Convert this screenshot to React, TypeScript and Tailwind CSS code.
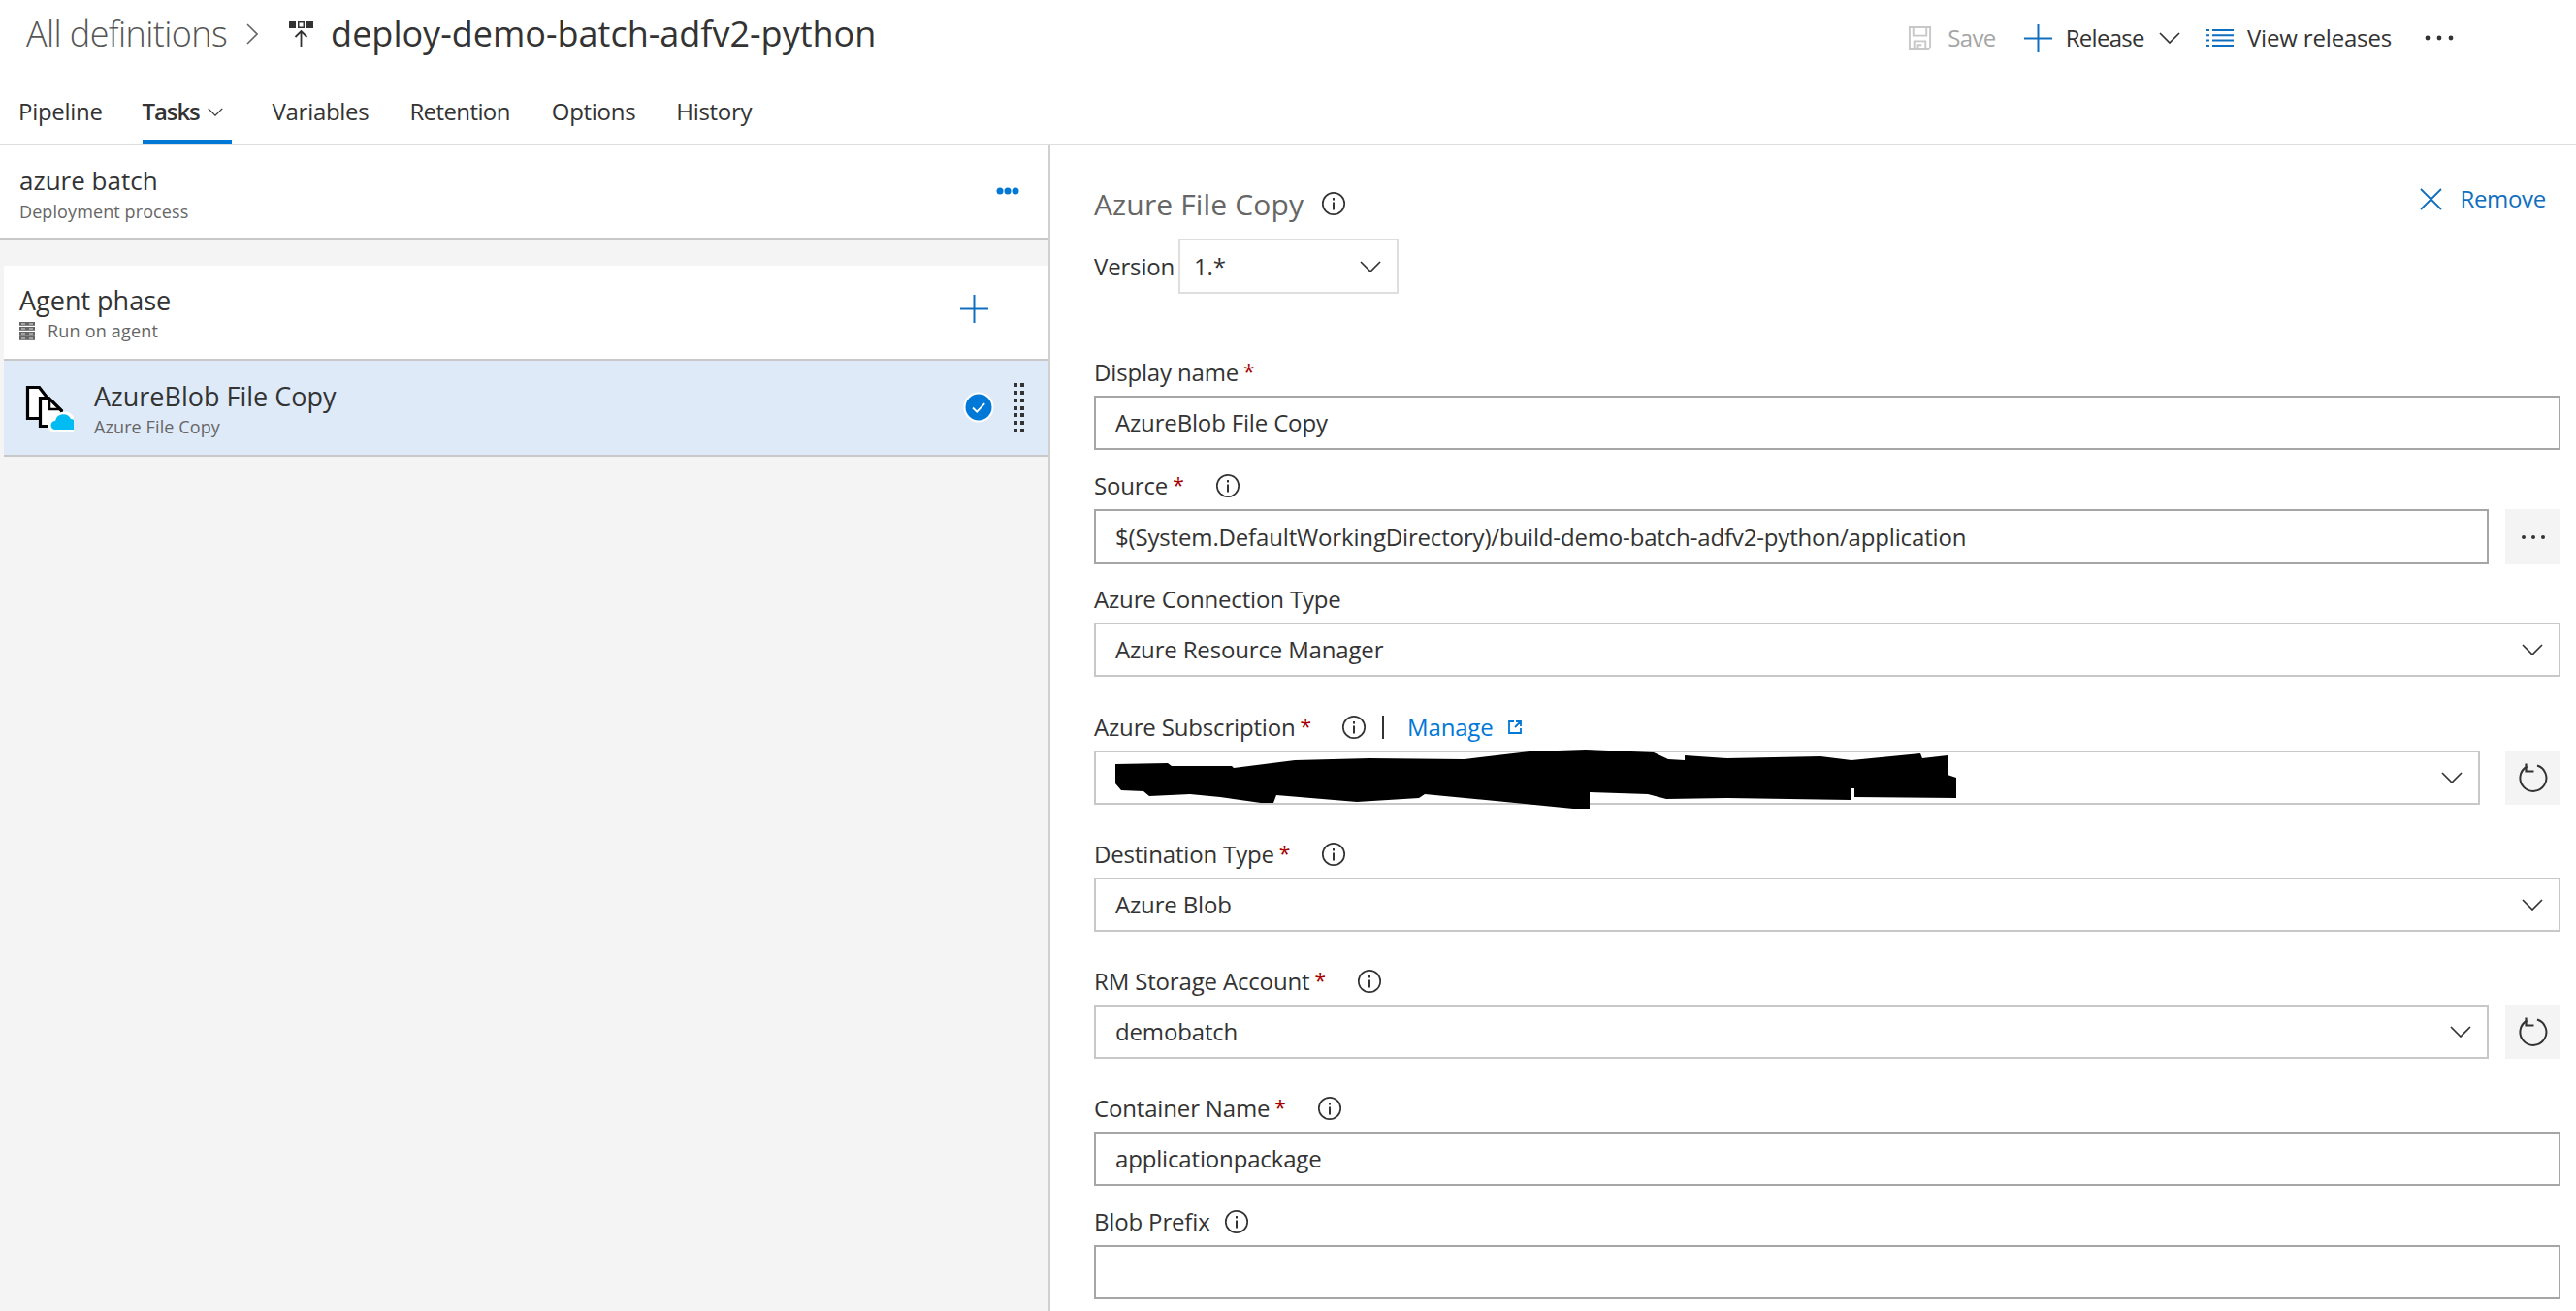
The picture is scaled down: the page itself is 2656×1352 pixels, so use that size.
const InfoIcon = ({ className = '' }: { className?: string }) => (
  <svg viewBox="0 0 26 26" className={`w-[26px] h-[26px] shrink-0 ${className}`} fill="none" stroke="#333">
    <circle cx="13" cy="13" r="11.2" strokeWidth="1.7" />
    <path d="M13 11.500v8" strokeWidth="2" />
    <path d="M13 7v2.400" strokeWidth="2" />
  </svg>
);

const Chevron = ({ className = '' }: { className?: string }) => (
  <svg viewBox="0 0 22 12" className={`w-[22px] h-[12px] shrink-0 ${className}`} fill="none" stroke="#333" strokeWidth="1.7">
    <path d="M1 1l10 10L21 1" />
  </svg>
);

const PlusIcon = ({ className = '' }: { className?: string }) => (
  <svg viewBox="0 0 29 29" className={`w-[29px] h-[29px] shrink-0 ${className}`} fill="none" stroke="#106ebe" strokeWidth="2">
    <path d="M14.500 0v29M0 14.500h29" />
  </svg>
);

const RefreshButton = () => (
  <button className="w-[57px] h-[56px] shrink-0 bg-[#f4f4f4] flex items-center justify-center">
    <svg viewBox="0 0 30 30" className="w-[30px] h-[30px]" fill="none" stroke="#333" strokeWidth="2">
      <path d="M19 2.500A13.500 13.500 0 1 1 8.500 3.500" />
      <path d="M7.500 0.500v8h8" strokeWidth="2.200" />
    </svg>
  </button>
);

const Label = ({ text, required, info }: { text: string; required?: boolean; info?: string }) => (
  <div className="h-[32px] mb-[8px] flex items-center text-[#333] text-[24px] tracking-[-0.16px]">
    <span>{text}</span>
    {required && <span className="text-[#a80000] text-[21px] ml-[5px]">*</span>}
    {info && <span className={info}><InfoIcon /></span>}
  </div>
);

const TextField = ({ value, className = '' }: { value?: string; className?: string }) => (
  <div className={`border-2 border-[#a6a6a6] bg-white px-[20px] flex items-center text-[#333] text-[24px] tracking-[-0.16px] ${className}`}>
    {value}
  </div>
);

const SelectField = ({ value, className = '' }: { value?: string; className?: string }) => (
  <div className={`h-[56px] border-2 border-[#c8c8c8] bg-white pl-[20px] pr-[16px] flex items-center justify-between text-[#333] text-[24px] tracking-[-0.16px] ${className}`}>
    <span>{value}</span>
    <Chevron />
  </div>
);

const SaveIcon = () => (
  <svg viewBox="0 0 26 26" className="w-[25px] h-[25px]" fill="none" stroke="#c8c8c8" strokeWidth="2">
    <path d="M2 1h22v22l-2 2H2z" />
    <path d="M6 1v9h14V1" />
    <path d="M7 25v-9h12v9" />
    <path d="M11 25v-5h4" />
  </svg>
);

const BuildDefIcon = () => (
  <svg viewBox="0 0 26 26" className="w-[26px] h-[26px]">
    <rect x="1" y="0" width="7" height="7" fill="#333" />
    <rect x="10" y="0" width="7" height="7" fill="#333" />
    <rect x="11.500" y="1.500" width="4" height="4" fill="#fff" />
    <rect x="19" y="0" width="7" height="7" fill="#333" />
    <path d="M13.500 26V10M7.500 16l6-6 6 6" fill="none" stroke="#333" strokeWidth="1.800" />
  </svg>
);

const ListIcon = () => (
  <svg viewBox="0 0 28 18" className="w-[28px] h-[18px]" fill="none" stroke="#106ebe" strokeWidth="2">
    <path d="M0 1h3M6 1h22M0 6.300h3M6 6.300h22M0 11.600h3M6 11.600h22M0 17h3M6 17h22" />
  </svg>
);

const ServerIcon = () => (
  <svg viewBox="0 0 16 19" className="w-[16px] h-[19px] shrink-0">
    <rect y="0" width="16" height="3.800" fill="#666" />
    <rect y="5" width="16" height="3.800" fill="#666" />
    <rect y="10" width="16" height="3.800" fill="#666" />
    <rect y="15" width="16" height="3.800" fill="#666" />
    <path d="M2 2h4M2 7h4M2 12h4M2 17h4M10 2h4M10 7h4M10 12h4M10 17h4" stroke="#ddd" strokeWidth="1.200" />
  </svg>
);

const FileCopyIcon = () => (
  <svg viewBox="0 0 50 50" className="w-[50px] h-[50px] shrink-0">
    <path d="M2.500 3.500h12l7 9v23h-19z" fill="#fff" stroke="#000" strokeWidth="3.200" />
    <path d="M15.500 14.500h9l13 13v16h-22z" fill="#fff" stroke="#000" strokeWidth="3.200" />
    <path d="M25 15v11h12" fill="none" stroke="#000" strokeWidth="2.500" />
    <path d="M31 50a7 7 0 0 1-1-14 11 11 0 0 1 20-2v16z" fill="#fff" />
    <path d="M31 47a4.500 4.500 0 0 1 0-9 8.500 8.500 0 0 1 16-2 7 7 0 0 1 3 1v10z" fill="#00bcf2" />
  </svg>
);

const Gripper = () => (
  <div className="grid grid-cols-2 gap-x-[3px] gap-y-[3.700px] shrink-0 mr-[1px]">
    {Array.from({ length: 14 }).map((_, i) => (
      <span key={i} className="w-[4px] h-[4px] bg-[#333]" />
    ))}
  </div>
);

const Tab = ({ text, className = '' }: { text: string; className?: string }) => (
  <div className={`flex items-center h-[78px] pt-[12px] ${className}`}>{text}</div>
);

export default function App() {
  return (
    <div className="w-[2656px] h-[1352px] overflow-hidden bg-white font-['Open_Sans','Noto_Sans',sans-serif] text-[#333] flex flex-col">
      <div className="h-[70px] flex items-center justify-between shrink-0">
        <div className="flex items-center pl-[27px]">
          <span className="text-[36px] font-light text-[#555] tracking-[-0.6px]">All definitions</span>
          <svg viewBox="0 0 12 22" className="w-[12px] h-[22px] ml-[20px]" fill="none" stroke="#666" strokeWidth="1.600">
            <path d="M1 1l10 10L1 21" />
          </svg>
          <span className="ml-[31px]"><BuildDefIcon /></span>
          <span className="ml-[18px] text-[36px] text-[#333] font-normal">deploy-demo-batch-adfv2-python</span>
        </div>
        <div className="flex items-center text-[24px] tracking-[-0.16px] pr-[126px] mb-[-8px]">
          <SaveIcon />
          <span className="ml-[16px] text-[#a6a6a6] tracking-[-0.6px]">Save</span>
          <PlusIcon className="ml-[29px]" />
          <span className="ml-[14px] tracking-[-0.7px]">Release</span>
          <Chevron className="ml-[15px]" />
          <span className="ml-[27px]"><ListIcon /></span>
          <span className="ml-[14px]">View releases</span>
          <svg viewBox="0 0 30 6" className="w-[30px] h-[6px] ml-[34px]" fill="#333">
            <circle cx="3" cy="3" r="2.400" />
            <circle cx="15" cy="3" r="2.400" />
            <circle cx="27" cy="3" r="2.400" />
          </svg>
        </div>
      </div>

      <div className="h-[80px] shrink-0 border-b-2 border-[#dedede] flex items-stretch pl-[19px] text-[24px] tracking-[-0.3px]">
        <Tab text="Pipeline" />
        <div className="ml-[41px] h-[78px] border-b-[4px] border-[#0078d7] flex items-center pt-[16px] w-[92px]">
          <span className="font-semibold tracking-[-1.1px]">Tasks</span>
          <Chevron className="ml-[8px] !w-[16px] !h-[9px]" />
        </div>
        <Tab text="Variables" className="ml-[42px]" />
        <Tab text="Retention" className="ml-[42px] tracking-[-0.6px]" />
        <Tab text="Options" className="ml-[43px]" />
        <Tab text="History" className="ml-[42px]" />
      </div>

      <div className="flex-1 flex min-h-0">
        <div className="w-[1083px] shrink-0 bg-[#f4f4f4] border-r-2 border-[#d0d0d0]">
          <div className="h-[97px] bg-white border-b-2 border-[#c8c8c8] pl-[20px] pr-[30px] flex items-center justify-between">
            <div className="flex flex-col mt-[4px]">
              <span className="text-[26px] leading-[36px]">azure batch</span>
              <span className="text-[18px] leading-[28px] text-[#666] tracking-[0.1px]">Deployment process</span>
            </div>
            <svg viewBox="0 0 24 8" className="w-[24px] h-[8px] mt-[-2px]" fill="#0078d7">
              <circle cx="4" cy="4" r="3.500" />
              <circle cx="12" cy="4" r="3.500" />
              <circle cx="20" cy="4" r="3.500" />
            </svg>
          </div>
          <div className="ml-[4px] mt-[27px] h-[98px] bg-white border-b-2 border-[#c8c8c8] pl-[16px] pr-[62px] flex items-center justify-between">
            <div className="flex flex-col mt-[2px]">
              <span className="text-[27px] leading-[36px]">Agent phase</span>
              <span className="flex items-center text-[18px] leading-[26px] text-[#666] tracking-[0.2px]">
                <ServerIcon />
                <span className="ml-[13px]">Run on agent</span>
              </span>
            </div>
            <PlusIcon className="mt-[-8px]" />
          </div>
          <div className="ml-[4px] h-[99px] bg-[#deeaf8] border-b-2 border-[#c8c8c8] pl-[22px] pr-[24px] flex items-center">
            <FileCopyIcon />
            <div className="flex flex-col ml-[21px] flex-1 mt-[2px]">
              <span className="text-[27px] leading-[36px]">AzureBlob File Copy</span>
              <span className="text-[18px] leading-[26px] text-[#666] tracking-[0.1px]">Azure File Copy</span>
            </div>
            <svg viewBox="0 0 32 32" className="w-[32px] h-[32px] mr-[20px] mt-[-2px]">
              <circle cx="16" cy="16" r="15.500" fill="#fff" />
              <circle cx="16" cy="16" r="13.500" fill="#0078d7" />
              <path d="M10 16.500l4.200 4.200 8-8.500" fill="none" stroke="#fff" strokeWidth="1.800" />
            </svg>
            <Gripper />
          </div>
        </div>

        <div className="flex-1 pl-[45px] pr-[16px] pt-[40px] min-w-0">
          <div className="h-[40px] flex items-center justify-between">
            <div className="flex items-center">
              <span className="text-[30px] text-[#666] tracking-[0.15px]">Azure File Copy</span>
              <InfoIcon className="ml-[18px]" />
            </div>
            <div className="flex items-center text-[#106ebe] text-[24px] tracking-[-0.3px] mb-[10px] mr-[15px]">
              <svg viewBox="0 0 23 23" className="w-[23px] h-[23px]" fill="none" stroke="#106ebe" strokeWidth="1.800">
                <path d="M1 1l21 21M22 1L1 22" />
              </svg>
              <span className="ml-[18px]">Remove</span>
            </div>
          </div>
          <div className="mt-[16px] h-[57px] flex items-center text-[24px] tracking-[-0.16px]">
            <span className="w-[87px]">Version</span>
            <div className="w-[227px] h-[57px] border-2 border-[#dedede] pl-[14px] pr-[16px] flex items-center justify-between">
              <span>1.*</span>
              <Chevron />
            </div>
          </div>

          <div className="mt-[65px]">
            <Label text="Display name" required />
            <TextField value="AzureBlob File Copy" className="h-[56px]" />
          </div>

          <div className="mt-[21px]">
            <Label text="Source" required info="ml-[32px]" />
            <div className="flex items-stretch">
              <TextField value="$(System.DefaultWorkingDirectory)/build-demo-batch-adfv2-python/application" className="flex-1 h-[57px]" />
              <button className="w-[57px] h-[57px] ml-[17px] bg-[#f4f4f4] flex items-center justify-center">
                <svg viewBox="0 0 26 6" className="w-[26px] h-[6px]" fill="#333">
                  <circle cx="3" cy="3" r="2" />
                  <circle cx="13" cy="3" r="2" />
                  <circle cx="23" cy="3" r="2" />
                </svg>
              </button>
            </div>
          </div>

          <div className="mt-[20px]">
            <Label text="Azure Connection Type" />
            <SelectField value="Azure Resource Manager" />
          </div>

          <div className="mt-[36px]">
            <div className="h-[32px] mb-[8px] flex items-center text-[24px] tracking-[-0.16px]">
              <span>Azure Subscription</span>
              <span className="text-[#a80000] text-[21px] ml-[5px]">*</span>
              <InfoIcon className="ml-[31px]" />
              <span className="ml-[16px] w-[2px] h-[24px] bg-[#333]" />
              <span className="ml-[24px] text-[#0078d7]">Manage</span>
              <svg viewBox="0 0 16 16" className="w-[16px] h-[16px] ml-[14px]" fill="none" stroke="#0078d7" strokeWidth="1.800">
                <path d="M7 2H2v12h12V9M9 2h5v5M14 2L8 8" />
              </svg>
            </div>
            <div className="flex items-stretch">
              <div className="relative flex-1 min-w-0 mr-[26px]">
                <SelectField />
                <svg viewBox="1150 773 870 62" className="absolute left-[22px] top-[-1px] w-[870px] h-[62px]">
                  <path d="M1150 788L1204 787L1208 790L1270 790L1272 792L1335 784L1412 782L1510 783L1577 775L1635 773L1705 776L1720 783L1737 784L1737 779L1781 782L1877 780L1909 784L1980 777L1982 782L2008 779L2008 799L2017 802L2017 823L1912 822L1912 813L1908 813L1908 825L1781 823L1718 824L1699 819L1639 817L1639 834L1622 834L1552 827L1469 819L1463 823L1399 827L1316 820L1313 828L1300 828L1258 822L1227 819L1185 821L1179 816L1156 815L1150 808Z" fill="#000" />
                </svg>
              </div>
              <RefreshButton />
            </div>
          </div>

          <div className="mt-[35px]">
            <Label text="Destination Type" required info="ml-[32px]" />
            <SelectField value="Azure Blob" />
          </div>

          <div className="mt-[35px]">
            <Label text="RM Storage Account" required info="ml-[32px]" />
            <div className="flex items-stretch">
              <SelectField value="demobatch" className="flex-1 mr-[17px]" />
              <RefreshButton />
            </div>
          </div>

          <div className="mt-[35px]">
            <Label text="Container Name" required info="ml-[32px]" />
            <TextField value="applicationpackage" className="h-[56px]" />
          </div>

          <div className="mt-[21px]">
            <Label text="Blob Prefix" info="ml-[14px]" />
            <TextField className="h-[56px]" />
          </div>
        </div>
      </div>
    </div>
  );
}
